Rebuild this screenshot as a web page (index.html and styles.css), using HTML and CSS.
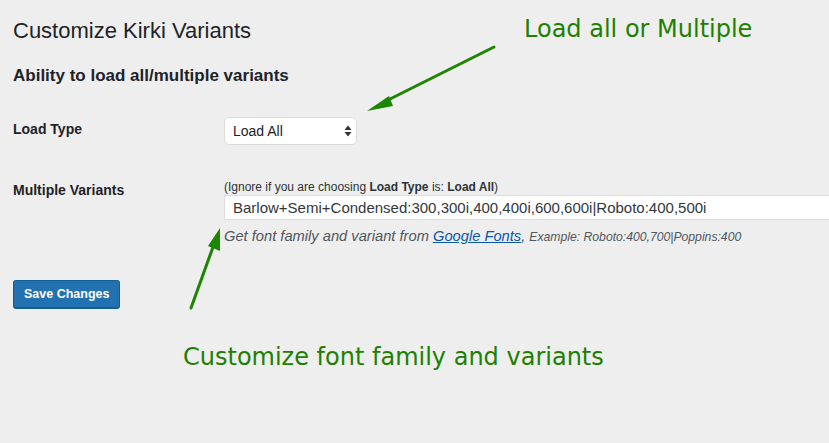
FILE: index.html
```html
<!DOCTYPE html>
<html>
<head>
<meta charset="utf-8">
<link rel="stylesheet" href="styles.css">
</head>
<body>
<div class="wrap">
  <h1 class="title">Customize Kirki Variants</h1>
  <h2 class="subtitle">Ability to load all/multiple variants</h2>
  <div class="form">
    <div class="row row-select">
      <div class="label">Load Type</div>
      <div class="field">
        <div class="select">
          <span>Load All</span>
          <svg class="updown" width="8" height="12" viewBox="0 0 8 12"><path d="M4 0.5 L7.5 5 H0.5 Z M4 11.5 L7.5 7 H0.5 Z" fill="#333"/></svg>
        </div>
      </div>
    </div>
    <div class="row row-input">
      <div class="label">Multiple Variants</div>
      <div class="field">
        <div class="hint">(Ignore if you are choosing <b>Load Type</b> is: <b>Load All</b>)</div>
        <div class="input">Barlow+Semi+Condensed:300,300i,400,400i,600,600i|Roboto:400,500i</div>
        <div class="desc">Get font family and variant from <a href="#">Google Fonts</a>, <small>Example: Roboto:400,700|Poppins:400</small></div>
      </div>
    </div>
  </div>
  <div class="submit"><button class="btn">Save Changes</button></div>
</div>
<div class="note note-top">Load all or Multiple</div>
<div class="note note-bottom">Customize font family and variants</div>
<svg class="arrows" width="829" height="443" viewBox="0 0 829 443">
  <g stroke="#1b8600" stroke-width="3" stroke-linecap="round" fill="none">
    <line x1="494" y1="47" x2="384" y2="102"/>
    <line x1="191" y1="308" x2="213" y2="247"/>
  </g>
  <g fill="#1b8600">
    <polygon points="367,111 389,96 393,106"/>
    <polygon points="220,228 220,251 208,246"/>
  </g>
</svg>
</body>
</html>
```
FILE: styles.css
```css
html, body {
  margin: 0;
  padding: 0;
  background: #eeeeee;
  width: 829px;
  height: 443px;
  overflow: hidden;
  font-family: "Liberation Sans", Arial, sans-serif;
  color: #23282d;
}
.wrap {
  padding: 0 0 0 13px;
}
.title {
  margin: 0;
  padding-top: 17px;
  font-size: 22px;
  font-weight: 400;
  line-height: 28px;
  color: #1d2327;
}
.subtitle {
  margin: 0;
  padding-top: 21px;
  font-size: 17px;
  font-weight: 700;
  line-height: 20px;
  color: #1d2327;
}
.form {
  padding-top: 31px;
}
.row {
  display: flex;
}
.label {
  flex: 0 0 211px;
  width: 211px;
  font-size: 14px;
  font-weight: 700;
  color: #1d2327;
}
.row-select .label {
  padding-top: 4px;
}
.select {
  box-sizing: border-box;
  width: 133px;
  height: 28px;
  background: #fff;
  border: 1px solid #dcdcdc;
  border-radius: 5px;
  display: flex;
  align-items: center;
  justify-content: space-between;
  padding: 0 4px 0 8px;
  font-size: 14px;
  color: #1d2327;
}
.row-input {
  padding-top: 35px;
}
.row-input .label {
  padding-top: 2px;
}
.field {
  flex: 1;
  min-width: 0;
}
.hint {
  font-size: 12px;
  line-height: 14px;
  color: #2c3338;
}
.hint b {
  font-weight: 700;
}
.input {
  box-sizing: border-box;
  margin-top: 1px;
  width: 640px;
  height: 25px;
  background: #fff;
  border: 1px solid #dddddd;
  border-right: none;
  padding: 0 0 0 8px;
  font-size: 15px;
  line-height: 23px;
  color: #32373c;
  white-space: nowrap;
}
.desc {
  margin-top: 8px;
  font-size: 14.7px;
  font-style: italic;
  color: #50575e;
  white-space: nowrap;
}
.desc a {
  color: #0a58a5;
  text-decoration: underline;
}
.desc small {
  font-size: 12.2px;
}
.submit {
  padding-top: 36px;
}
.btn {
  height: 29px;
  padding: 0 10px;
  background: #2271b1;
  border: 1px solid #135e96;
  border-bottom-width: 2px;
  border-radius: 3px;
  color: #fff;
  font-family: "Liberation Sans", Arial, sans-serif;
  font-size: 12.5px;
  font-weight: 700;
}
.note {
  position: absolute;
  font-family: "DejaVu Sans", Verdana, sans-serif;
  font-size: 24px;
  color: #1e8000;
  line-height: 28px;
  white-space: nowrap;
}
.note-top {
  left: 524px;
  top: 15px;
}
.note-bottom {
  left: 183px;
  top: 343px;
}
.arrows {
  position: absolute;
  left: 0;
  top: 0;
}
```
